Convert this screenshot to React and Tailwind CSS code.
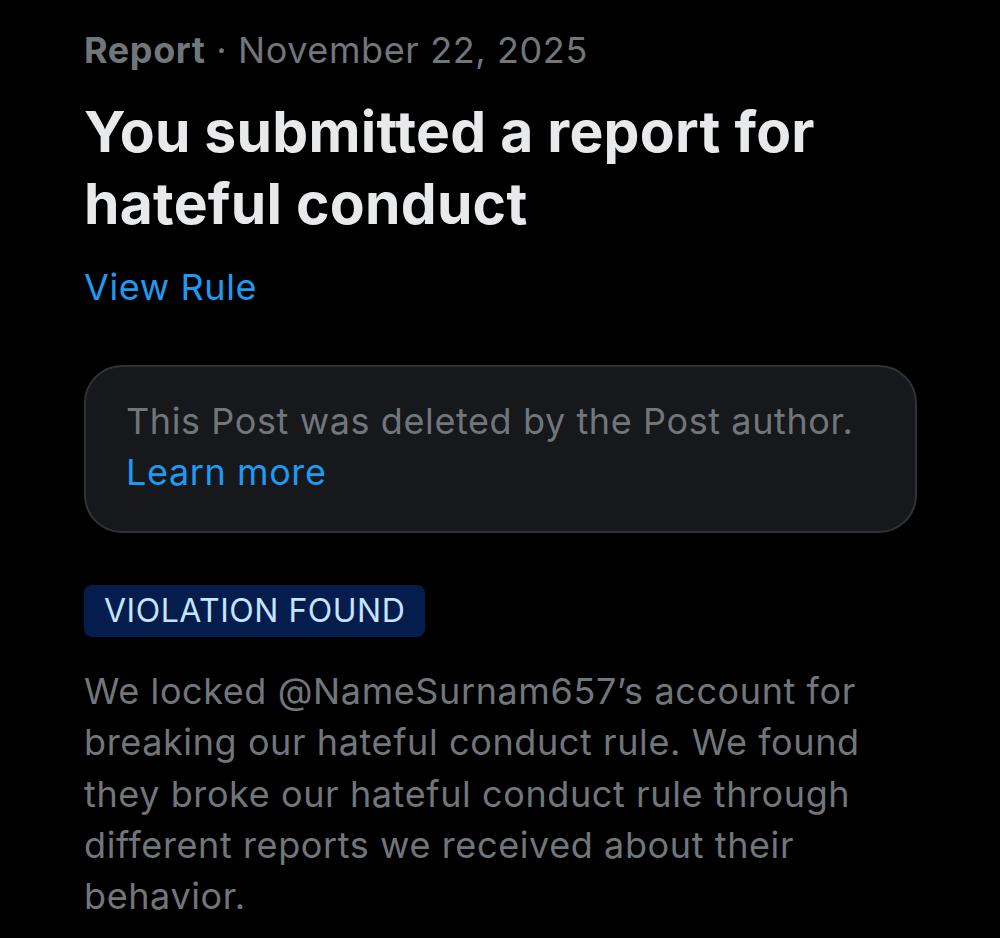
import React from "react";

const ReportDetail = () => {
  return (
    <div className="min-h-[938px] bg-black pl-[84px] pr-[83px] pt-[22px] font-['Inter',sans-serif] antialiased">
      <div className="text-[36px] leading-[56px] tracking-[0.6px] text-[#71767b]">
        <span className="font-bold">Report</span>
        <span> · November 22, 2025</span>
      </div>

      <h1 className="mt-[18px] text-[57px] font-bold leading-[72px] tracking-[0.25px] text-[#e7e9ea]">
        You submitted a report for hateful conduct
      </h1>

      <a className="mt-[22px] block text-[36px] leading-[50px] tracking-[0.6px] text-[#1d9bf0]">
        View Rule
      </a>

      <div className="mt-[53px] rounded-[38px] border-2 border-[#2f3336] bg-[#16181c] pb-[33px] pl-[40px] pr-[30px] pt-[29px]">
        <p className="text-[36px] leading-[51px] tracking-[0.6px] text-[#71767b]">
          This Post was deleted by the Post author.
          <br />
          <span className="text-[#1d9bf0]">Learn more</span>
        </p>
      </div>

      <div className="mt-[52px] inline-block rounded-[8px] bg-[#051d4d] px-[20px] text-[32px] leading-[52px] tracking-[0.5px] text-[#c6e3ff]">
        VIOLATION FOUND
      </div>

      <p className="mt-[29px] text-[36px] leading-[51.3px] tracking-[0.6px] text-[#71767b]">
        We locked @NameSurnam657’s account for breaking our hateful conduct
        rule. We found they broke our hateful conduct rule through different
        reports we received about their behavior.
      </p>
    </div>
  );
};

export default function App() {
  return <ReportDetail />;
}
